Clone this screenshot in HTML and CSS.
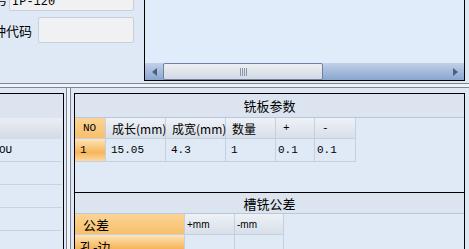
FILE: index.html
```html
<!DOCTYPE html>
<html>
<head>
<meta charset="utf-8">
<link rel="stylesheet" href="styles.css">
</head>
<body>
<div class="screen">
  <div class="top">
    <div class="form">
      <div class="frow">
        <span class="flabel l1">型号</span>
        <div class="finput i1">IP-120</div>
      </div>
      <div class="frow">
        <span class="flabel l2">品种代码</span>
        <div class="finput i2"></div>
      </div>
    </div>
    <div class="viewbox">
      <div class="viewarea"></div>
      <div class="hscroll">
        <div class="sbtn sleft"><svg width="5" height="8" viewBox="0 0 5 8"><polygon points="5,0 0,4 5,8" fill="#4e5f7b"/></svg></div>
        <div class="thumb"><div class="grip"><i></i><i></i><i></i><i></i></div></div>
        <div class="track"></div>
        <div class="sbtn sright"><svg width="5" height="8" viewBox="0 0 5 8"><polygon points="0,0 5,4 0,8" fill="#4e5f7b"/></svg></div>
      </div>
    </div>
  </div>
  <div class="hsplit"></div>
  <div class="bottom">
    <div class="lpanel">
      <div class="lcap"></div>
      <div class="lhead"></div>
      <div class="lrow"><span class="cut">OU</span></div>
      <div class="lrow"></div>
      <div class="lrow"></div>
      <div class="lrow"></div>
      <div class="lrow"></div>
    </div>
    <div class="vsplit"></div>
    <div class="rpanel">
      <div class="title">铣板参数</div>
      <div class="grow hrow">
        <div class="cell c1 orange mono pad8">NO</div>
        <div class="cell c2 head">成长(mm)</div>
        <div class="cell c2 head">成宽(mm)</div>
        <div class="cell c4 head">数量</div>
        <div class="cell c5 head mono pad7">+</div>
        <div class="cell c6 head mono pad7">-</div>
      </div>
      <div class="grow drow">
        <div class="cell c1 orange2 mono">1</div>
        <div class="cell c2 mono">15.05</div>
        <div class="cell c2 mono">4.3</div>
        <div class="cell c4 mono">1</div>
        <div class="cell c5 mono pad2">0.1</div>
        <div class="cell c6 mono pad2">0.1</div>
      </div>
      <div class="spacer"></div>
      <div class="title title2">槽铣公差</div>
      <div class="grow hrow">
        <div class="cell t1 orange pad8 big">公差</div>
        <div class="cell t2 head small">+mm</div>
        <div class="cell t3 head small">-mm</div>
      </div>
      <div class="grow drow">
        <div class="cell t1 orange2 pad5 big">孔-边</div>
        <div class="cell t2"></div>
        <div class="cell t3"></div>
      </div>
    </div>
  </div>
</div>
</body>
</html>
```
FILE: styles.css
```css
body {
  margin: 0;
  background: #dfe9f6;
}
.screen {
  width: 469px;
  height: 249px;
  overflow: hidden;
  font-family: "Noto Sans CJK SC", sans-serif;
  color: #000;
  background: #dfe9f6;
}
.top {
  display: flex;
  height: 83px;
  margin-top: -2px;
}
.form {
  width: 144px;
  flex-shrink: 0;
  display: flex;
  flex-direction: column;
  gap: 6px;
  margin-top: -13px;
}
.frow {
  display: flex;
  justify-content: flex-end;
  align-items: center;
  padding-right: 10px;
  height: 26px;
}
.flabel {
  white-space: nowrap;
  font-size: 13px;
  flex-shrink: 0;
}
.l1 { margin-right: 1px; }
.l2 { margin-right: 6px; }
.finput {
  height: 26px;
  box-sizing: border-box;
  border: 1px solid #c9d0d9;
  border-radius: 2px;
  background: #f0f1f3;
  flex-shrink: 0;
  font: 12px "Liberation Mono", monospace;
  padding-left: 2px;
  display: flex;
  align-items: flex-end;
  padding-bottom: 2px;
  line-height: 12px;
}
.i1 { width: 125px; }
.i2 { width: 96px; }
.viewbox {
  width: 321px;
  height: 83px;
  box-sizing: border-box;
  border: 1px solid #000;
  display: flex;
  flex-direction: column;
  flex-shrink: 0;
}
.viewarea {
  flex: 1;
  background: #e1ecfa;
}
.hscroll {
  height: 17px;
  display: flex;
  background: linear-gradient(#c0d1e8, #89a5ce);
}
.sbtn {
  display: flex;
  align-items: center;
  justify-content: center;
}
.sleft { width: 18px; }
.sright { width: 17px; }
.thumb {
  width: 160px;
  box-sizing: border-box;
  border: 1px solid #6f82a2;
  border-radius: 2px;
  background: linear-gradient(#eef0f3, #d1d9e3);
  display: flex;
  align-items: center;
  justify-content: center;
}
.grip {
  display: flex;
  gap: 1px;
  height: 8px;
}
.grip i {
  width: 1px;
  background: #8b97a9;
}
.track { flex: 1; }
.hsplit {
  margin-top: 2px;
  height: 5px;
  box-sizing: border-box;
  border-top: 1px solid #80868e;
  border-bottom: 1px solid #80868e;
  background: #eef3f9;
}
.bottom {
  display: flex;
  height: 170px;
}
.lpanel {
  margin-left: -1px;
  width: 65px;
  flex-shrink: 0;
  margin-top: 5px;
  border: 1px solid #000;
  border-bottom: none;
  box-sizing: border-box;
  background: #e0eaf7;
  padding-right: 1px;
}
.lcap {
  height: 24px;
  background: #dce4ef;
}
.lhead {
  height: 21px;
  background: linear-gradient(#eaeef4, #d3dbe6);
}
.lrow {
  height: 23px;
  box-sizing: border-box;
  border-bottom: 1px solid #c6d3e4;
  font: 11px "Liberation Mono", monospace;
  display: flex;
  align-items: center;
}
.cut { margin-left: -1px; }
.vsplit {
  width: 5px;
  flex-shrink: 0;
  box-sizing: border-box;
  border-left: 1px solid #80868e;
  border-right: 1px solid #80868e;
  background: #eef3f9;
  margin: 0 3px 0 2px;
}
.rpanel {
  width: 391px;
  flex-shrink: 0;
  margin-top: 5px;
  border: 1px solid #000;
  border-bottom: none;
  box-sizing: border-box;
  background: #e0eaf7;
}
.title {
  height: 24px;
  box-sizing: border-box;
  border-bottom: 1px solid #b8c7db;
  background: #dce4ef;
  display: flex;
  align-items: center;
  justify-content: center;
  font-size: 13px;
}
.title2 {
  height: 22px;
  border-top: 1px solid #000;
}
.grow { display: flex; }
.hrow { height: 21px; }
.drow { height: 23px; }
.cell {
  box-sizing: border-box;
  border-right: 1px solid #c5d0de;
  border-bottom: 1px solid #c5d0de;
  display: flex;
  align-items: center;
  padding-left: 5px;
  font-size: 12px;
  white-space: nowrap;
}
.head { background: linear-gradient(#eef2f7, #d8dfe9); padding-left: 6px; }
.orange { background: linear-gradient(#fbd596, #f6bf6c); }
.orange2 { background: linear-gradient(#fde3b6 0%, #f9c273 45%, #f7b459 60%, #fcd9a2 100%); }
.mono { font: 11px "Liberation Mono", monospace; }
.pad8 { padding-left: 8px; }
.pad7 { padding-left: 7px; }
.pad5 { padding-left: 5px; }
.pad2 { padding-left: 2px; }
.big { font-size: 13px; }
.small { font: 10px "Liberation Sans", sans-serif; padding-left: 2px; }
.c1 { width: 31px; }
.c2 { width: 60px; }
.c4 { width: 50px; }
.c5 { width: 39px; }
.c6 { width: 41px; }
.t1 { width: 110px; }
.t2 { width: 50px; }
.t3 { width: 49px; }
.spacer { height: 30px; }
```
